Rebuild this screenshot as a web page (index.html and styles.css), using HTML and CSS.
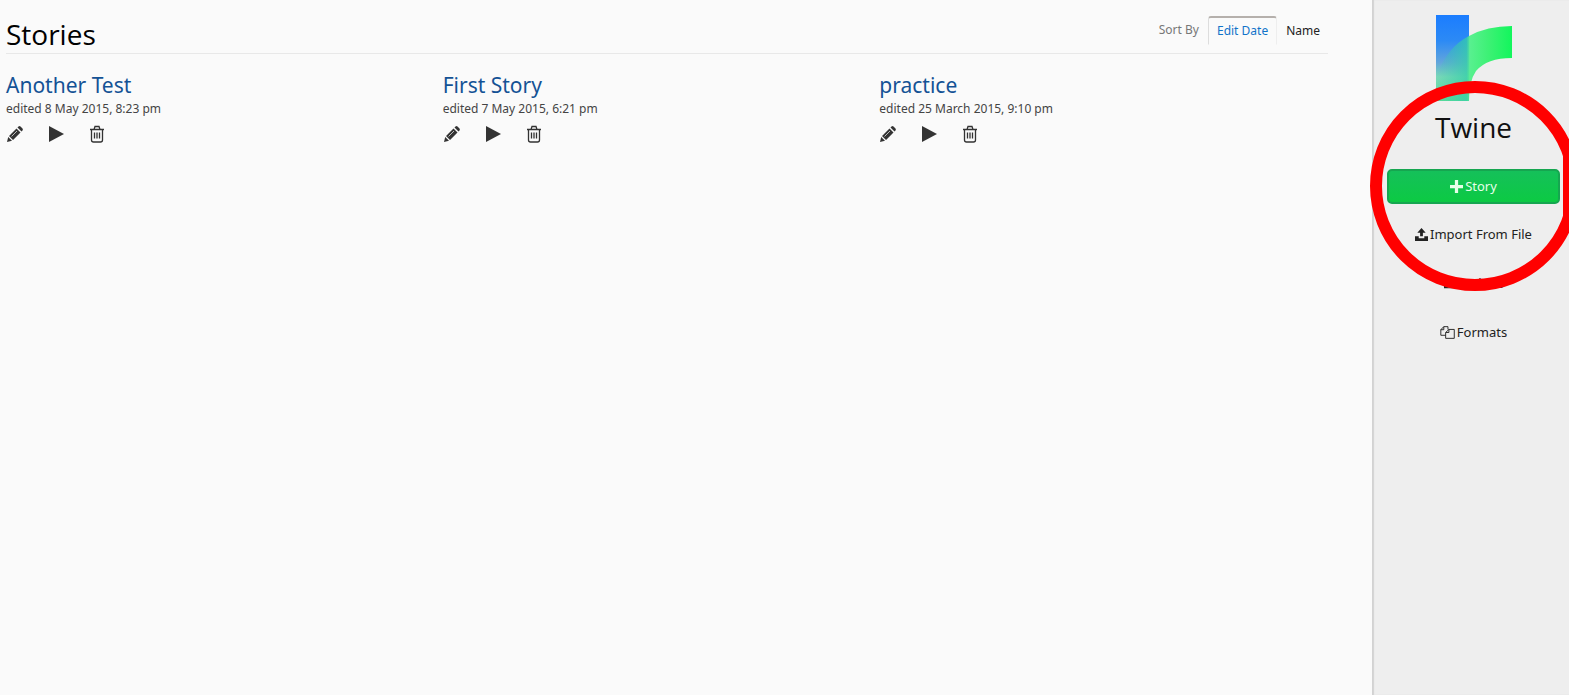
FILE: index.html
```html
<!DOCTYPE html>
<html lang="en">
<head>
<meta charset="utf-8">
<title>Twine</title>
<link rel="stylesheet" href="styles.css">
</head>
<body>
<svg class="symbols" aria-hidden="true">
  <symbol id="pencil" viewBox="0 0 18 18"><path d="M1 17l1.200-5 3.800 3.800zM3 11l7.500-7.500 4 4L7 15zM11.500 2.500l1-1q1-.8 2 0l2 2q.8 1 0 2l-1 1z"/><path d="M5.500 11.500l5.500-5.500" stroke="#bbb"/></symbol>
  <symbol id="play" viewBox="0 0 16 18"><path d="M1 1l15 8-15 8z"/></symbol>
  <symbol id="trash" viewBox="0 0 16 18"><path d="M1 4.500h14M5 4.500l1-3h4l1 3M2.500 4.500V15q0 2 2 2h7q2 0 2-2V4.500M5.500 7.500v6M8 7.500v6M10.500 7.500v6" fill="none" stroke="currentColor" stroke-width="1.300"/></symbol>
</svg>
<main class="stories">
  <header class="bar">
    <h1>Stories</h1>
    <div class="sort"><span class="sort-label">Sort By</span><button class="tab active">Edit Date</button><button class="tab">Name</button></div>
  </header>
  <div class="grid">
    <article>
      <h2><a href="#">Another Test</a></h2>
      <p>edited 8 May 2015, 8:23 pm</p>
      <div class="actions"><button aria-label="Edit"><svg><use href="#pencil"/></svg></button><button aria-label="Play"><svg><use href="#play"/></svg></button><button aria-label="Delete"><svg><use href="#trash"/></svg></button></div>
    </article>
    <article>
      <h2><a href="#">First Story</a></h2>
      <p>edited 7 May 2015, 6:21 pm</p>
      <div class="actions"><button aria-label="Edit"><svg><use href="#pencil"/></svg></button><button aria-label="Play"><svg><use href="#play"/></svg></button><button aria-label="Delete"><svg><use href="#trash"/></svg></button></div>
    </article>
    <article>
      <h2><a href="#">practice</a></h2>
      <p>edited 25 March 2015, 9:10 pm</p>
      <div class="actions"><button aria-label="Edit"><svg><use href="#pencil"/></svg></button><button aria-label="Play"><svg><use href="#play"/></svg></button><button aria-label="Delete"><svg><use href="#trash"/></svg></button></div>
    </article>
  </div>
</main>
<aside class="side">
  <svg class="logo" viewBox="0 0 78 87" aria-hidden="true">
    <defs>
      <linearGradient id="stem" x2="0" y2="1"><stop stop-color="#1b7dff"/><stop offset=".3" stop-color="#2c8af5"/><stop offset=".55" stop-color="#62a5dc"/><stop offset=".72" stop-color="#7bd8b8"/><stop offset="1" stop-color="#5adb98"/></linearGradient>
      <linearGradient id="branch"><stop stop-color="#35cfa8" stop-opacity="0"/><stop offset=".4" stop-color="#35cfa8" stop-opacity=".75"/><stop offset=".45" stop-color="#58f08f"/><stop offset=".7" stop-color="#3cf174"/><stop offset="1" stop-color="#12f65c"/></linearGradient>
    </defs>
    <path d="M1 0h33v86H1z" fill="url(#stem)"/>
    <path d="M1 86V62Q12 32 34 21 52 11 77 11V43Q52 43 41 56 34 66 34 86z" fill="url(#branch)"/>
  </svg>
  <h1 class="brand">Twine</h1>
  <button class="add"><svg class="icon" viewBox="0 0 12 12"><path d="M4.500 0h3v4.500H12v3H7.500V12h-3V7.500H0v-3h4.500z"/></svg>Story</button>
  <button class="item"><svg class="icon" viewBox="0 0 14 14"><path d="M7 0l4.500 5H8.500v4h-3V5h-3zM0 9h4v2h6V9h4v5H0z"/></svg>Import From File</button>
  <button class="item"><svg class="icon" viewBox="0 0 14 14"><path d="M5.500 0h3v4h3L7 9 2.500 4h3zM0 9h4v2h6V9h4v3H0z"/></svg>Archive</button>
  <button class="item"><svg class="icon wide" viewBox="0 0 16 14"><path d="M4 .7h4.500v3M4 .7L.8 4v6H6M4 .7V4H.8M9.500 3.700h5.800v9.600H6V7l3.500-3.300V7H6" fill="none" stroke="currentColor"/></svg>Formats</button>
  <svg class="ring" viewBox="0 0 210 210" aria-hidden="true"><circle cx="105" cy="105" r="99"/><path d="M193 70h6.500v70H193z"/></svg>
</aside>
</body>
</html>
```
FILE: styles.css
```css
* { box-sizing: border-box; }
body { margin: 0; min-height: 100vh; display: flex; background: #fafafa; color: #222; font-family: "Noto Sans", sans-serif; font-size: 12px; line-height: 16px; overflow-x: hidden; }
button { border: 0; padding: 0; background: none; font: inherit; color: inherit; cursor: pointer; }
svg { fill: currentColor; }
h1, h2, p { margin: 0; font-weight: 400; }
.symbols { position: absolute; width: 0; height: 0; }
.stories { flex: 1; padding: 16px 44px 0 6px; }
.bar { display: flex; justify-content: space-between; border-bottom: 1px solid #e8e8e8; height: 38px; }
.bar h1 { font-family: "Open Sans", sans-serif; font-size: 28px; line-height: 36px; color: #000; }
.sort { display: flex; align-items: flex-start; }
.sort-label { color: #777; line-height: 28px; margin-right: 9px; }
.tab { height: 29px; padding: 0 8px; border: 1px solid transparent; }
.tab:last-child { padding-right: 7px; }
.tab.active { color: #1173c9; border-color: #b5b0ac #eee #fafafa #ddd; border-top-width: 2px; border-radius: 3px 3px 0 0; line-height: 14px; }
.grid { display: grid; grid-template-columns: repeat(3, 1fr); margin-right: 12px; padding-top: 17px; }
h2 { font-size: 21px; line-height: 28px; }
h2 a { color: #145295; text-decoration: none; }
.grid p { color: #444; line-height: 20px; }
.actions { display: flex; gap: 23px; padding-top: 6px; color: #333; }
.actions button, .actions svg { display: block; width: 18px; height: 18px; }
.side { position: relative; width: 197px; padding: 15px 9px 0 15px; background: #eee; box-shadow: inset 2px 0 1px #d2d2d2; display: flex; flex-direction: column; align-items: center; font-size: 13px; }
.logo { width: 78px; height: 87px; }
.brand { font-size: 28px; line-height: 36px; margin: 7px 0 24px; font-family: "Open Sans", sans-serif; color: #111; }
.add { align-self: stretch; height: 35px; padding-bottom: 2px; background: linear-gradient(#15c05a, #0cca43); color: #e6ffe9; border: 2px solid #16a650; border-radius: 5px; }
.item { height: 31px; margin-bottom: 18px; }
.add + .item { margin-top: 14px; }
.icon { width: 13px; height: 13px; margin-right: 2px; vertical-align: -2px; }
.icon.wide { width: 15px; }
.ring { position: absolute; left: -2px; top: 81px; width: 210px; height: 210px; pointer-events: none; }
.ring circle { fill: none; stroke: #f00; stroke-width: 12px; }
.ring path { fill: #f00; }
```
